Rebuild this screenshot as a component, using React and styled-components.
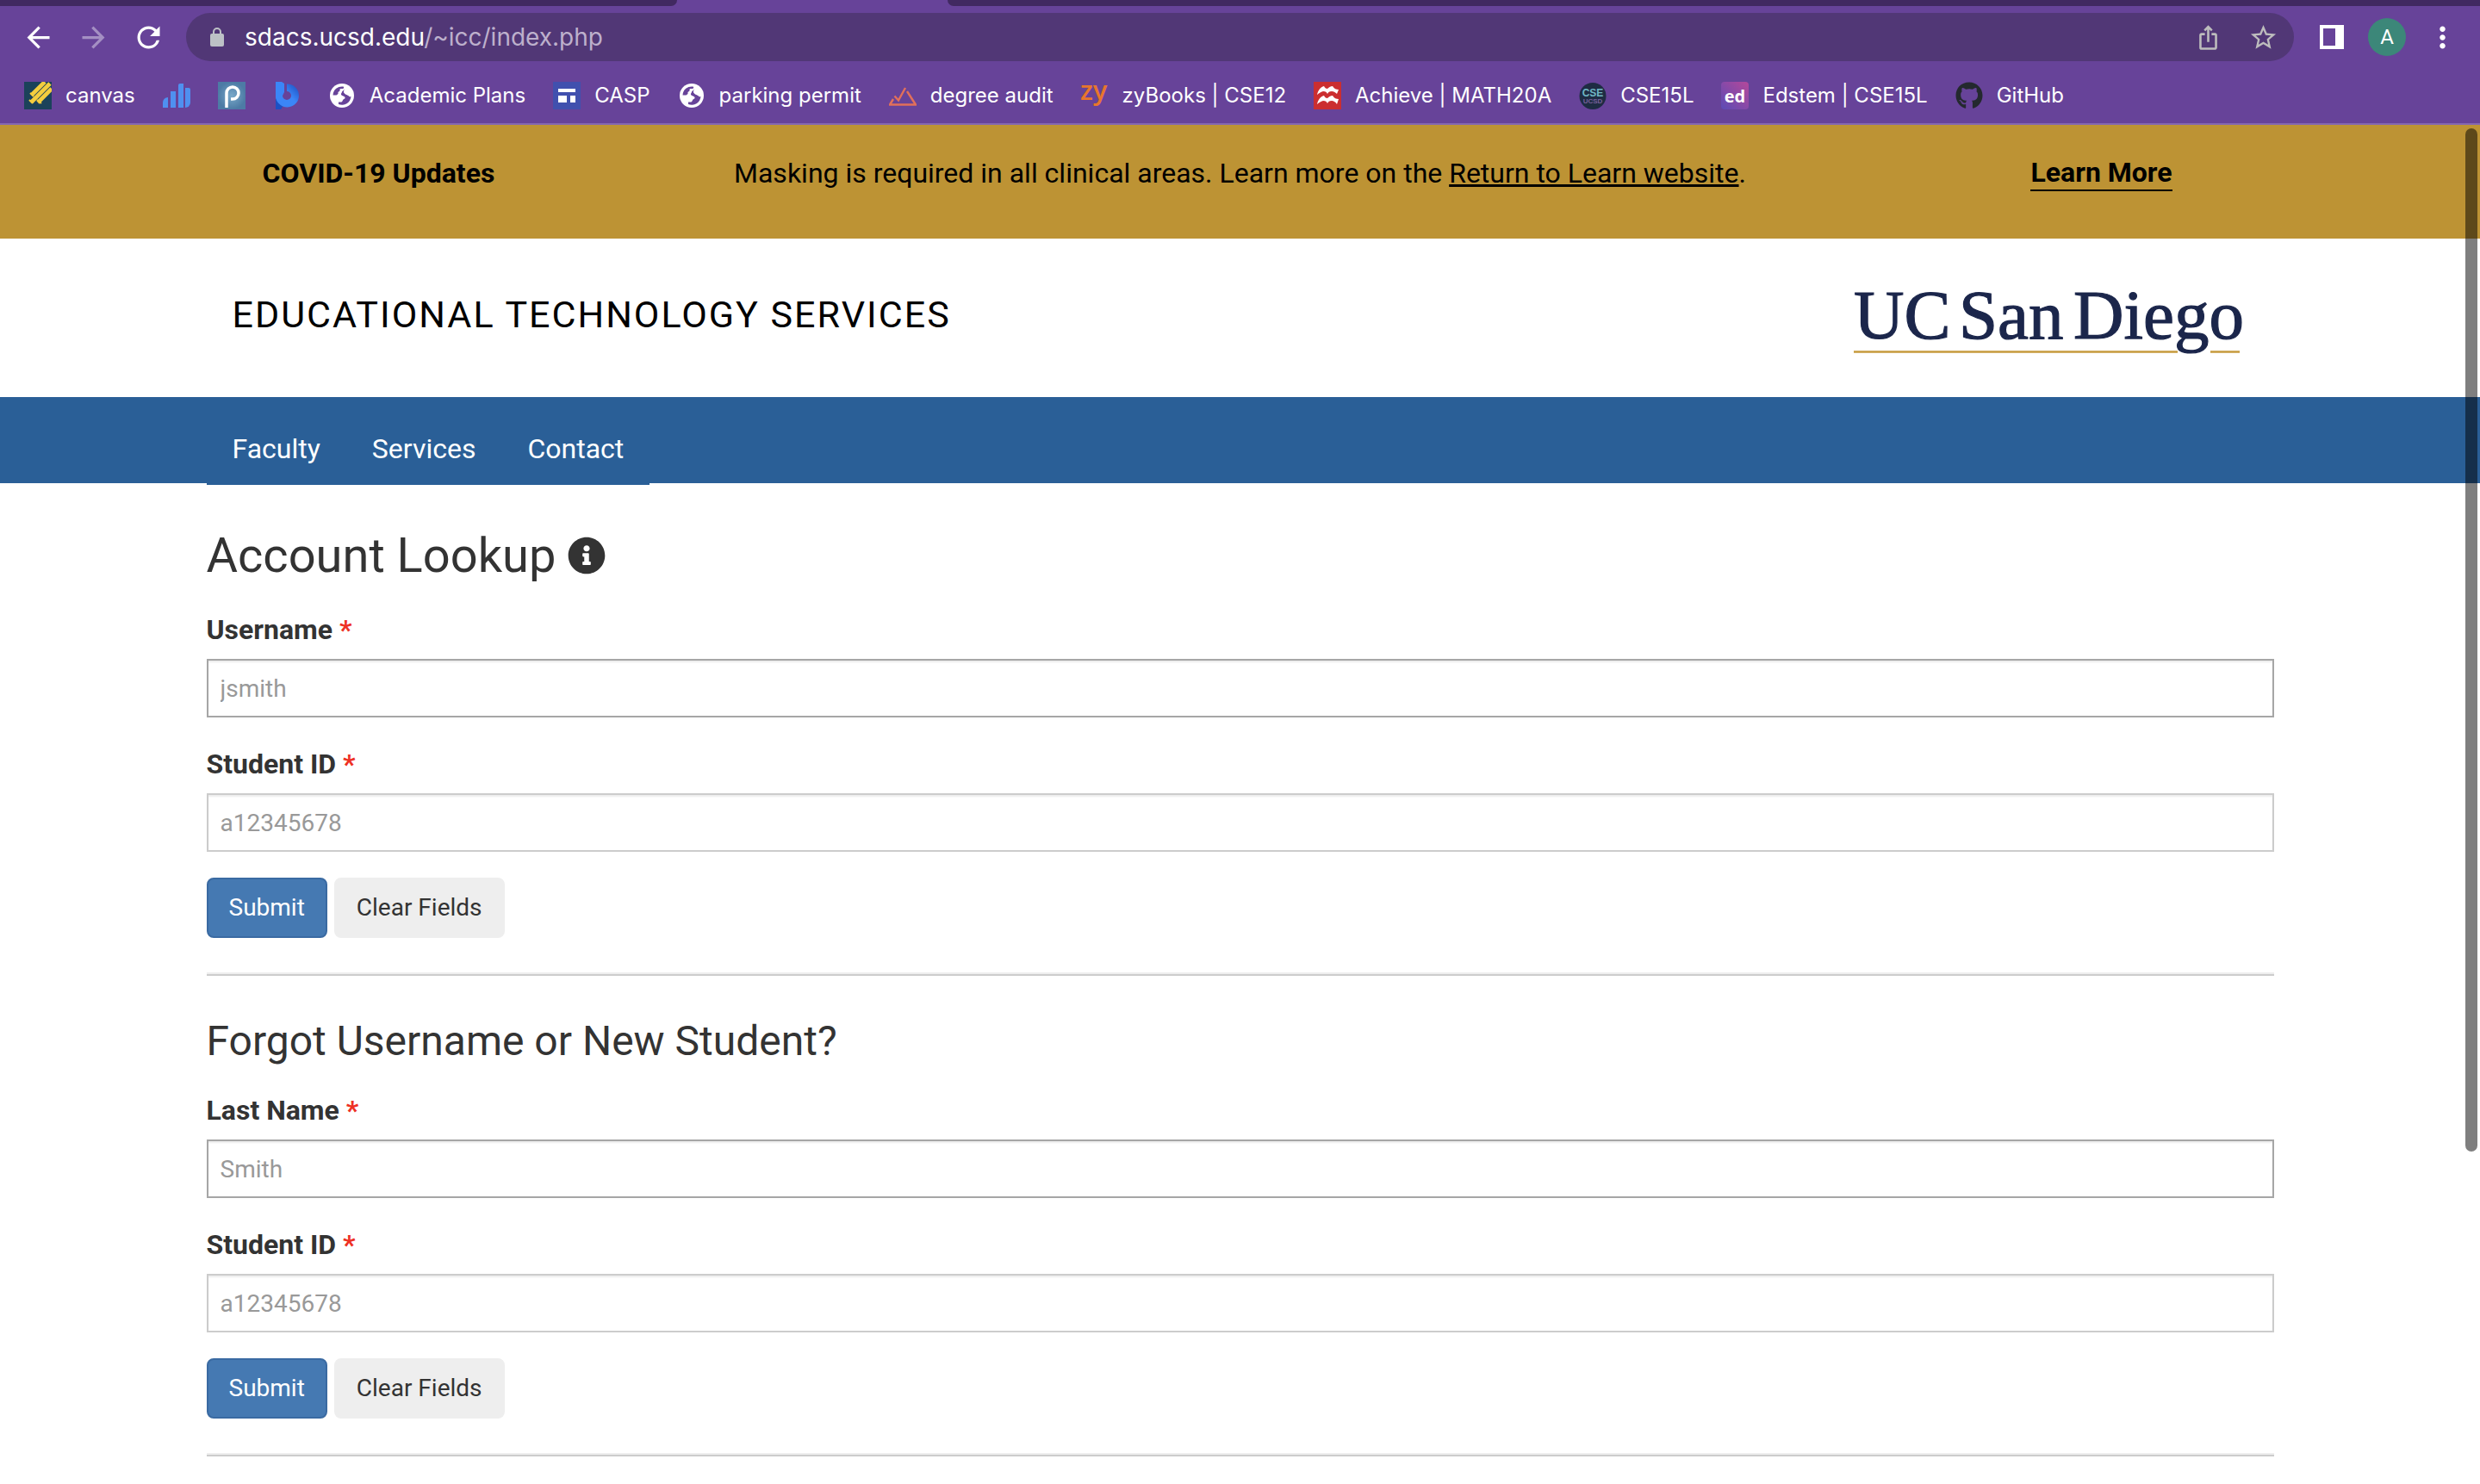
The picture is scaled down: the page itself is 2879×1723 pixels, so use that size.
import React, { useId } from 'react';
import styled, { createGlobalStyle } from 'styled-components';
import {
  MdArrowBack,
  MdArrowForward,
  MdRefresh,
  MdIosShare,
  MdStarBorder,
  MdMoreVert,
} from 'react-icons/md';
import { FaGithub, FaInfoCircle } from 'react-icons/fa';

const GlobalStyle = createGlobalStyle`
  * { box-sizing: border-box; }
  body {
    margin: 0;
    background: #fff;
    color: #333;
    font-family: Roboto, "Liberation Sans", sans-serif;
  }
`;

/* ---------- browser chrome ---------- */

const Chrome = styled.header`
  background: #674399;
  color: #fff;
  font-family: Inter, "Liberation Sans", sans-serif;
  border-bottom: 2px solid #8568b0;
`;

const TabStrip = styled.div`
  display: grid;
  grid-template-columns: 786px 1fr;
  column-gap: 314px;
  height: 7px;
`;

const InactiveTabs = styled.div`
  background: #412961;
  border-radius: ${(p) => (p.$side === 'left' ? '0 0 14px 0' : '0 0 0 14px')};
`;

const Toolbar = styled.div`
  display: flex;
  align-items: center;
  gap: 12px;
  height: 72px;
  padding: 0 12px;
`;

const ButtonGroup = styled.div`
  display: flex;
`;

const IconButton = styled.button`
  display: flex;
  align-items: center;
  justify-content: center;
  width: 64px;
  height: 56px;
  padding: 0;
  border: 0;
  background: none;
  color: ${(p) => p.$color || '#fff'};
`;

const AddressBar = styled.div`
  display: flex;
  align-items: center;
  flex: 1;
  height: 56px;
  padding: 0 4px 0 28px;
  border-radius: 28px;
  background: #513776;
`;

const Url = styled.span`
  flex: 1;
  margin-left: 24px;
  font-size: 28px;
  line-height: 40px;
`;

const UrlPath = styled.span`
  color: #bdb0cc;
`;

const Avatar = styled.span`
  display: flex;
  align-items: center;
  justify-content: center;
  width: 44px;
  height: 44px;
  border-radius: 50%;
  background: #3c8779;
  font-family: Roboto, sans-serif;
  font-size: 24px;
`;

const Bookmarks = styled.nav`
  display: flex;
  align-items: center;
  height: 64px;
  padding: 0 12px;
`;

const Bookmark = styled.a`
  display: flex;
  align-items: center;
  gap: 16px;
  padding: 0 16px;
  color: #fff;
  font-size: 24px;
  line-height: 32px;
  text-decoration: none;
  white-space: nowrap;

  svg { flex: none; }
`;

/* ---------- site ---------- */

const Viewport = styled.div`
  position: relative;
  min-height: calc(100vh - 145px);
`;

const ScrollThumb = styled.div`
  position: absolute;
  top: 4px;
  right: 3px;
  width: 14px;
  height: calc(75% + 4px);
  border-radius: 7px;
  background: rgba(0, 0, 0, 0.5);
`;

const Container = styled.div`
  max-width: 2400px;
  margin: 0 auto;
`;

const Banner = styled.section`
  height: 132px;
  padding-top: 36px;
  background: #bd9334;
`;

const BannerGrid = styled(Container)`
  display: grid;
  grid-template-columns: 1fr 4fr 1fr;
  align-items: start;
  justify-items: center;
  color: #000;
  font-size: 32px;
  line-height: 40px;
`;

const BannerText = styled.p`
  margin: 0;
`;

const BannerTitle = styled.strong`
  font-weight: 700;
`;

const TextLink = styled.a`
  color: #000;
`;

const MoreLink = styled.a`
  border-bottom: 2px solid #000;
  color: #000;
  font-weight: 700;
  line-height: 39px;
  text-decoration: none;
`;

const SiteHeader = styled(Container)`
  display: flex;
  align-items: center;
  justify-content: space-between;
  height: 184px;
  padding: 0 30px;
`;

const SiteTitle = styled.a`
  padding-bottom: 8px;
  color: #000;
  font-size: 43px;
  line-height: 48px;
  letter-spacing: 2px;
  text-transform: uppercase;
  text-decoration: none;
`;

const SiteNav = styled.nav`
  height: 100px;
  background: #2a5f97;
`;

const NavList = styled.ul`
  display: inline-flex;
  margin: 0;
  padding: 0;
  background: #2a5f97;
  list-style: none;
`;

const NavLink = styled.a`
  display: block;
  padding: 40px 30px 22px;
  color: #fff;
  font-size: 32px;
  line-height: 40px;
  text-decoration: none;
`;

const Main = styled.main`
  padding-top: 52px;
`;

const PageTitle = styled.h1`
  display: flex;
  align-items: center;
  gap: 14px;
  margin: 0 0 34px;
  font-size: 56px;
  font-weight: 400;
  line-height: 64px;
`;

const SectionTitle = styled.h2`
  margin: 0 0 34px;
  font-size: 48px;
  font-weight: 400;
  line-height: 52px;
`;

const Field = styled.div`
  display: flex;
  flex-direction: column;
  gap: 14px;
  margin-bottom: ${(p) => (p.$last ? '30px' : '34px')};
`;

const Label = styled.label`
  font-size: 32px;
  font-weight: 700;
  line-height: 40px;
`;

const Required = styled.span`
  color: #ee3124;
`;

const TextInput = styled.input`
  width: 100%;
  height: 68px;
  padding: 0 14px;
  border: 2px solid ${(p) => (p.$strong ? '#a6a6a6' : '#ccc')};
  border-radius: 0;
  background: #fff;
  box-shadow: inset 0 2px 2px rgba(0, 0, 0, 0.075);
  color: #333;
  font-family: inherit;
  font-size: 28px;

  &::placeholder { color: #999; opacity: 1; }
`;

const Actions = styled.div`
  display: flex;
  gap: 8px;
`;

const Button = styled.button`
  height: 70px;
  padding: 0 24px;
  border: 2px solid ${(p) => (p.$primary ? '#3a6aa2' : '#eee')};
  border-radius: 8px;
  background: ${(p) => (p.$primary ? '#4579b2' : '#eee')};
  color: ${(p) => (p.$primary ? '#fff' : '#333')};
  font-family: inherit;
  font-size: 28px;
  line-height: 40px;
`;

const Rule = styled.hr`
  height: 4px;
  margin: 40px 0 50px;
  border: 0;
  border-top: 2px solid #eee;
  border-bottom: 2px solid #ccc;

  &:last-child { margin-bottom: 0; }
`;

/* ---------- icons ---------- */

const Icon = ({ children }) => (
  <svg width="32" height="32" viewBox="0 0 32 32" aria-hidden="true">
    {children}
  </svg>
);

const CanvasIcon = () => (
  <Icon>
    <rect width="32" height="32" fill="#1b425a" />
    <path
      d="M9 15 24 0M8.500 23.500 30 2M16 24 32 8"
      stroke="#f5ce3e"
      strokeWidth="4.600"
      fill="none"
    />
    <path d="M7 13l4 4M6 21l4 4M15 21l5 4" stroke="#f5ce3e" strokeWidth="2" />
  </Icon>
);

const BarsIcon = () => (
  <Icon>
    <g fill="#4f90f0">
      <path d="M0 30v-6a6 6 0 0 1 6-6v12z" />
      <rect x="9" y="11" width="6" height="19" />
      <path d="M18 30V4a2 2 0 0 1 2-2h4v28z" />
      <path d="M26 7h4a2 2 0 0 1 2 2v15a6 6 0 0 1-6 6z" />
    </g>
  </Icon>
);

const PIcon = () => (
  <Icon>
    <defs>
      <radialGradient id="pGlow">
        <stop offset="0" stopColor="#79a9c9" />
        <stop offset="1" stopColor="#4d7ba5" />
      </radialGradient>
    </defs>
    <rect width="32" height="32" fill="url(#pGlow)" />
    <path d="M10 30V13a7 7 0 1 1 7 7h-2" stroke="#fff" strokeWidth="3.500" fill="none" />
  </Icon>
);

const BIcon = () => (
  <Icon>
    <defs>
      <linearGradient id="bBowl" x1="0" y1="1" x2="1" y2="0">
        <stop offset="0.550" stopColor="#3b86f7" />
        <stop offset="1" stopColor="#1a4bbd" />
      </linearGradient>
    </defs>
    <path d="M3 18h8v11l-2 3H3z" fill="#1c50c4" />
    <path d="M16 2.500a13.500 13.500 0 1 1-13 13.500h8a5 5 0 1 0 5-5z" fill="url(#bBowl)" />
    <path d="M3 0h7l3 2v10l-2 4v6l-6 1-2-5z" fill="#3b86f7" />
  </Icon>
);

const GlobeIcon = () => (
  <Icon>
    <circle cx="16" cy="16" r="14" fill="#fff" />
    <path
      d="M17.500 5.500c1 .3 1 2-.5 2.500h-2.500c-1.200.2-1 1.500-1 2.500l-2 1.500v2l-2 1.500H5.500A10.500 10.500 0 0 1 17.500 5.500z"
      fill="#674399"
    />
    <path
      d="M19 8.500c-1 1.500-1.500 3-.5 4.500 1.500 2 4 2 5.500 3.500.5 1 1.500 1 2.500.5A10.500 10.500 0 0 1 12 26v-2.500h3c1.500 0 1.500-2 2.500-3s2.500-1 2-2.500c-1-2-3-1-4.500-3-.5-1.500 1-2 1-3.500z"
      fill="#674399"
    />
    <path d="M18.500 12c1.500 3 4 3 6 4.500 2-1 1-5-1-7.500z" fill="#fff" />
  </Icon>
);

const SitesIcon = () => (
  <Icon>
    <rect width="32" height="32" fill="#4150ae" />
    <path d="M6 8h20v4H6zM6 16h10v8H6zM20 16h6v8h-6z" fill="#fff" />
  </Icon>
);

const AuditIcon = () => (
  <Icon>
    <path
      d="M5 20l-4 6.500h30L21 11M6.500 16.500l4.500 5L19 7"
      stroke="#e2705a"
      strokeWidth="2.400"
      fill="none"
    />
  </Icon>
);

const ZyIcon = () => (
  <Icon>
    <text
      x="-1"
      y="21"
      fill="#e8762c"
      fontFamily="Open Sans, sans-serif"
      fontWeight="600"
      fontSize="31"
    >
      zy
    </text>
  </Icon>
);

const AchieveIcon = () => (
  <Icon>
    <rect width="32" height="32" fill="#cb2e30" />
    <path
      d="M4 15c1-5 4-9 8-10 1 2 2 3 4 3 2-2 4-3 6-3 2 3 4 4 7 4l-2 5c-2-2-4-3-6-3-3 0-4 1-5 3-1-2-2-3-5-3-3 1-5 2-7 4zM4 26c1-5 4-9 8-10 1 2 2 3 4 3 2-2 4-3 6-3 2 3 4 4 7 4l-2 6c-2-3-4-4-6-4-3 0-4 1-5 3-1-2-2-3-5-3-3 1-5 2-7 4z"
      fill="#fff"
    />
  </Icon>
);

const CseIcon = () => (
  <Icon>
    <circle cx="16" cy="16.500" r="15.500" fill="#1e2c43" />
    <g fontFamily="Liberation Sans, sans-serif" textAnchor="middle" fontWeight="700">
      <text x="16" y="17" fontSize="12" fill="#6fb6c4">CSE</text>
      <text x="16" y="25" fontSize="8" fill="#77609c">UCSD</text>
    </g>
  </Icon>
);

const EdIcon = () => (
  <Icon>
    <defs>
      <linearGradient id="edFill" x1="0" y1="1" x2="1" y2="0">
        <stop offset="0" stopColor="#5b4bb5" />
        <stop offset="1" stopColor="#b5489a" />
      </linearGradient>
    </defs>
    <rect width="32" height="32" rx="4" fill="url(#edFill)" />
    <text
      x="16"
      y="24"
      textAnchor="middle"
      fill="#fff"
      fontFamily="Open Sans, sans-serif"
      fontWeight="700"
      fontSize="20"
    >
      ed
    </text>
  </Icon>
);

const LockIcon = () => (
  <svg width="16" height="22" viewBox="0 0 16 22" aria-hidden="true">
    <rect y="7" width="16" height="15" rx="2" fill="#bdc1c6" />
    <path d="M4 8V5a4 4 0 0 1 8 0v3" stroke="#bdc1c6" strokeWidth="2" fill="none" />
  </svg>
);

const SidePanelIcon = () => (
  <svg width="28" height="28" viewBox="0 0 28 28" aria-hidden="true">
    <path d="M0 0h28v28H0zM4 4v20h14V4z" fill="#fff" fillRule="evenodd" />
  </svg>
);

const Logo = () => (
  <svg width="458" height="92" viewBox="0 0 458 92" role="img" aria-label="UC San Diego">
    <path d="M0 85.500h376M414 85.500h34" stroke="#c69b3d" strokeWidth="2.500" />
    <g
      fill="#1b264b"
      stroke="#1b264b"
      strokeWidth="1.200"
      fontFamily="Liberation Serif, serif"
      fontSize="81"
    >
      <text x="0" y="70">UC</text>
      <text x="122" y="70">San</text>
      <text x="255" y="70">Diego</text>
    </g>
  </svg>
);

/* ---------- content ---------- */

const bookmarks = [
  { icon: <CanvasIcon />, text: 'canvas' },
  { icon: <BarsIcon />, label: 'Polls' },
  { icon: <PIcon />, label: 'PrairieLearn' },
  { icon: <BIcon />, label: 'Bookmark' },
  { icon: <GlobeIcon />, text: 'Academic Plans' },
  { icon: <SitesIcon />, text: 'CASP' },
  { icon: <GlobeIcon />, text: 'parking permit' },
  { icon: <AuditIcon />, text: 'degree audit' },
  { icon: <ZyIcon />, text: 'zyBooks | CSE12' },
  { icon: <AchieveIcon />, text: 'Achieve | MATH20A' },
  { icon: <CseIcon />, text: 'CSE15L' },
  { icon: <EdIcon />, text: 'Edstem | CSE15L' },
  { icon: <FaGithub size={32} color="#24292e" />, text: 'GitHub' },
];

const LabeledInput = ({ label, placeholder, strong, last }) => {
  const id = useId();
  return (
    <Field $last={last}>
      <Label htmlFor={id}>
        {label} <Required>*</Required>
      </Label>
      <TextInput id={id} type="text" placeholder={placeholder} $strong={strong} />
    </Field>
  );
};

const LookupForm = ({ firstLabel, firstPlaceholder }) => (
  <form onSubmit={(e) => e.preventDefault()}>
    <LabeledInput label={firstLabel} placeholder={firstPlaceholder} strong />
    <LabeledInput label="Student ID" placeholder="a12345678" last />
    <Actions>
      <Button type="submit" $primary>Submit</Button>
      <Button type="reset">Clear Fields</Button>
    </Actions>
  </form>
);

export default function App() {
  return (
    <>
      <GlobalStyle />
      <Chrome>
        <TabStrip>
          <InactiveTabs $side="left" />
          <InactiveTabs $side="right" />
        </TabStrip>
        <Toolbar>
          <ButtonGroup>
            <IconButton aria-label="Back"><MdArrowBack size={39} /></IconButton>
            <IconButton aria-label="Forward" $color="#a48fc3"><MdArrowForward size={39} /></IconButton>
            <IconButton aria-label="Reload"><MdRefresh size={39} /></IconButton>
          </ButtonGroup>
          <AddressBar>
            <LockIcon />
            <Url>
              sdacs.ucsd.edu<UrlPath>/~icc/index.php</UrlPath>
            </Url>
            <IconButton aria-label="Share" $color="#bdbdbd"><MdIosShare size={31} /></IconButton>
            <IconButton aria-label="Bookmark this page" $color="#bdbdbd"><MdStarBorder size={35} /></IconButton>
          </AddressBar>
          <ButtonGroup>
            <IconButton aria-label="Side panel"><SidePanelIcon /></IconButton>
            <IconButton aria-label="Profile"><Avatar>A</Avatar></IconButton>
            <IconButton aria-label="Menu"><MdMoreVert size={39} /></IconButton>
          </ButtonGroup>
        </Toolbar>
        <Bookmarks aria-label="Bookmarks">
          {bookmarks.map((b, i) => (
            <Bookmark key={i} href="#" aria-label={b.label}>
              {b.icon}
              {b.text && <span>{b.text}</span>}
            </Bookmark>
          ))}
        </Bookmarks>
      </Chrome>

      <Viewport>
        <Banner>
          <BannerGrid>
            <BannerTitle>COVID-19 Updates</BannerTitle>
            <BannerText>
              Masking is required in all clinical areas. Learn more on the{' '}
              <TextLink href="#">Return to Learn website</TextLink>.
            </BannerText>
            <MoreLink href="#">Learn More</MoreLink>
          </BannerGrid>
        </Banner>

        <SiteHeader>
          <SiteTitle href="#">Educational Technology Services</SiteTitle>
          <Logo />
        </SiteHeader>

        <SiteNav aria-label="Site">
          <Container>
            <NavList>
              {['Faculty', 'Services', 'Contact'].map((item) => (
                <li key={item}><NavLink href="#">{item}</NavLink></li>
              ))}
            </NavList>
          </Container>
        </SiteNav>

        <Container>
          <Main>
            <PageTitle>
              Account Lookup <FaInfoCircle size={44} />
            </PageTitle>
            <LookupForm firstLabel="Username" firstPlaceholder="jsmith" />
            <Rule />
            <SectionTitle>Forgot Username or New Student?</SectionTitle>
            <LookupForm firstLabel="Last Name" firstPlaceholder="Smith" />
            <Rule />
          </Main>
        </Container>
        <ScrollThumb />
      </Viewport>
    </>
  );
}
